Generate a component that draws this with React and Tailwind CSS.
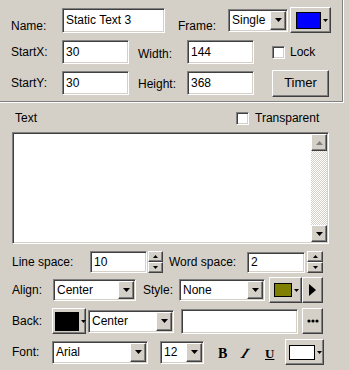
import React from "react";

const sunken =
  "border border-t-[#808080] border-l-[#808080] border-r-white border-b-white shadow-[inset_1px_1px_0_#404040,inset_-1px_-1px_0_#d4d0c8]";
const raised =
  "border border-t-white border-l-white border-r-[#404040] border-b-[#404040] shadow-[inset_-1px_-1px_0_#808080] bg-[#d4d0c8]";

function Down({ w = 7, h = 4 }) {
  return (
    <svg width={w} height={h} viewBox={`0 0 ${w} ${h}`}>
      <polygon points={`0,0 ${w},0 ${w / 2},${h}`} fill="#000" />
    </svg>
  );
}
function Up({ w = 7, h = 4, fill = "#000" }) {
  return (
    <svg width={w} height={h} viewBox={`0 0 ${w} ${h}`}>
      <polygon points={`0,${h} ${w},${h} ${w / 2},0`} fill={fill} />
    </svg>
  );
}

function Input({ cls, children }) {
  return (
    <div className={`${sunken} bg-white flex items-center pl-[3px] ${cls}`}>
      {children}
    </div>
  );
}

function Select({ cls, text }) {
  return (
    <div className={`${sunken} bg-white flex items-stretch p-[1px] ${cls}`}>
      <span className="flex-1 flex items-center pl-[2px]">{text}</span>
      <div className={`${raised} w-[16px] flex items-center justify-center`}>
        <Down />
      </div>
    </div>
  );
}

function ColorBtn({ cls, color, sq, pl }) {
  return (
    <div className={`${raised} flex items-center ${cls}`}>
      <div className={`${pl} flex items-center`}>
        <div className={`border border-black ${sq}`} style={{ background: color }} />
        <div className="ml-[2px]">
          <Down w={5} h={3} />
        </div>
      </div>
    </div>
  );
}

function Spinner({ cls }) {
  return (
    <div className={`flex flex-col ${cls}`}>
      <div className={`${raised} flex-1 flex items-center justify-center`}>
        <Up w={5} h={3} />
      </div>
      <div className={`${raised} flex-1 flex items-center justify-center`}>
        <Down w={5} h={3} />
      </div>
    </div>
  );
}

function Check({ cls }) {
  return <div className={`${sunken} bg-white w-[13px] h-[13px] ${cls}`} />;
}

export default function App() {
  return (
    <div className="w-[349px] h-[370px] bg-[#d4d0c8] font-['Liberation_Sans',Arial,sans-serif] text-[12px] leading-[14px] text-black overflow-hidden">
      <div className="w-[344px] border-r border-b border-white">
        <div className="h-[102px] border-r border-b border-[#808080] pt-[7px]">
          {/* Row 1 */}
          <div className="flex h-[26px] items-center pl-[11px]">
            <span className="w-[51px] self-end">Name:</span>
            <Input cls="w-[103px] h-[25px]">Static Text 3</Input>
            <span className="ml-[13px] w-[50px] self-end">Frame:</span>
            <Select cls="w-[60px] h-[23px]" text="Single" />
            <ColorBtn
              cls="ml-[2px] w-[41px] h-[26px]"
              color="#0000ff"
              sq="w-[25px] h-[17px]"
              pl="pl-[5px]"
            />
          </div>
          {/* Row 2 */}
          <div className="flex h-[24px] mt-[7px] items-center pl-[11px]">
            <span className="w-[51px]">StartX:</span>
            <Input cls="w-[67px] h-[24px]">30</Input>
            <span className="ml-[9px] w-[49px] pt-[4px]">Width:</span>
            <Input cls="w-[67px] h-[24px]">144</Input>
            <Check cls="ml-[18px]" />
            <span className="ml-[5px]">Lock</span>
          </div>
          {/* Row 3 */}
          <div className="flex h-[28px] mt-[5px] items-center pl-[11px]">
            <span className="w-[51px]">StartY:</span>
            <Input cls="w-[67px] h-[24px]">30</Input>
            <span className="ml-[9px] w-[49px] pt-[2px]">Height:</span>
            <Input cls="w-[67px] h-[24px]">368</Input>
            <div
              className={`${raised} ml-[18px] w-[57px] h-[27px] flex items-center justify-center text-[13px]`}
            >
              Timer
            </div>
          </div>
        </div>
      </div>

      {/* Text row */}
      <div className="flex h-[20px] mt-[5px] items-center">
        <span className="ml-[15px] w-[221px]">Text</span>
        <Check />
        <span className="ml-[6px]">Transparent</span>
      </div>

      {/* Textarea */}
      <div className={`${sunken} bg-white ml-[12px] mt-[4px] w-[317px] h-[112px] p-[1px] flex justify-end`}>
        <div className="w-[16px] flex flex-col">
          <div className={`${raised} h-[17px] flex items-center justify-center`}>
            <Up w={7} h={4} fill="#808080" />
          </div>
          <div className="flex-1 bg-[image:repeating-conic-gradient(#d4d0c8_0_25%,#ffffff_0_50%)] bg-[length:2px_2px]" />
          <div className={`${raised} h-[17px] flex items-center justify-center`}>
            <Down w={7} h={4} />
          </div>
        </div>
      </div>

      {/* Line space row */}
      <div className="flex h-[22px] mt-[7px] items-center pl-[12px]">
        <span className="w-[78px]">Line space:</span>
        <Input cls="w-[57px] h-[22px]">10</Input>
        <Spinner cls="ml-[1px] w-[15px] h-[22px]" />
        <span className="ml-[6px] w-[78px]">Word space:</span>
        <Input cls="w-[58px] h-[21px]">2</Input>
        <Spinner cls="ml-[2px] w-[16px] h-[22px]" />
      </div>

      {/* Align row */}
      <div className="flex h-[26px] mt-[4px] items-center pl-[12px]">
        <span className="w-[41px]">Align:</span>
        <Select cls="w-[83px] h-[22px]" text="Center" />
        <span className="ml-[7px] w-[36px]">Style:</span>
        <Select cls="w-[86px] h-[22px]" text="None" />
        <ColorBtn
          cls="ml-[4px] w-[33px] h-[26px]"
          color="#808000"
          sq="w-[18px] h-[14px]"
          pl="pl-[4px]"
        />
        <div className={`${raised} w-[21px] h-[26px] flex items-center justify-center`}>
          <svg width="7" height="12" viewBox="0 0 7 12">
            <polygon points="0,0 7,6 0,12" fill="#000" />
          </svg>
        </div>
      </div>

      {/* Back row */}
      <div className="flex h-[26px] mt-[5px] items-center pl-[12px]">
        <span className="w-[40px]">Back:</span>
        <ColorBtn
          cls="w-[34px] h-[26px]"
          color="#000000"
          sq="w-[24px] h-[19px]"
          pl="pl-[2px]"
        />
        <Select cls="ml-[2px] w-[86px] h-[23px]" text="Center" />
        <Input cls="ml-[7px] w-[117px] h-[25px]"></Input>
        <div className={`${raised} ml-[4px] w-[21px] h-[26px] flex items-center justify-center`}>
          <svg width="12" height="4" viewBox="0 0 12 4">
            <circle cx="2" cy="2" r="1.6" fill="#000" />
            <circle cx="6" cy="2" r="1.6" fill="#000" />
            <circle cx="10" cy="2" r="1.6" fill="#000" />
          </svg>
        </div>
      </div>

      {/* Font row */}
      <div className="flex h-[26px] mt-[5px] items-center pl-[12px]">
        <span className="w-[40px]">Font:</span>
        <Select cls="w-[96px] h-[23px]" text="Arial" />
        <Select cls="ml-[12px] w-[44px] h-[23px]" text="12" />
        <span className="ml-[14px] w-[24px] pt-[3px] font-['Liberation_Serif',serif] font-bold text-[14px]">B</span>
        <span className="w-[23px] pt-[3px] font-['Liberation_Serif',serif] font-bold italic text-[14px]">
          <span className="inline-block -skew-x-[25deg]">I</span>
        </span>
        <span className="w-[20px] pt-[3px] font-['Liberation_Serif',serif] font-bold text-[13px] underline">U</span>
        <ColorBtn
          cls="w-[39px] h-[26px]"
          color="#ffffff"
          sq="w-[26px] h-[15px]"
          pl="pl-[3px]"
        />
      </div>
    </div>
  );
}
